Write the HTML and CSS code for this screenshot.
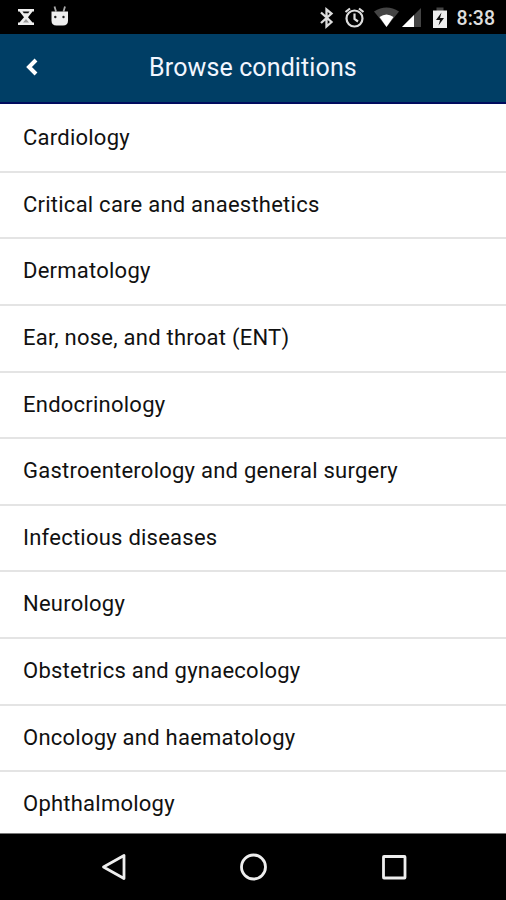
FILE: index.html
```html
<!DOCTYPE html>
<html lang="en">
<head>
    <meta charset="UTF-8">
    <meta name="viewport" content="width=device-width, initial-scale=1.0">
    <title>Browse conditions</title>
    <link rel="stylesheet" href="styles.css">
</head>
<body>
    <!-- Status bar -->
    <div class="status-bar">
        <svg class="status-left" width="80" height="34" viewBox="0 0 80 34">
            <path d="M18 9h16v2.500h-1.500L28 17.200l4.500 5.300H34V25H18v-2.500h1.500l4.500-5.300-4.500-5.700H18z" fill="#eee"/>
            <path d="M22.500 11.500h7l-1.300 1.800h-4.400z" fill="#111"/>
            <path d="M26 19l3 3.500h-6z" fill="#999"/>
            <path d="M54.500 6.500l1.500 5M65 6.500l-1.500 5" stroke="#aaa" stroke-width="1.800"/>
            <path d="M51.500 11.500h16.500v9q0 5-5 5h-6.500q-5 0-5-5z" fill="#eee"/>
            <circle cx="55.300" cy="17" r="1.200" fill="#222"/>
            <circle cx="63.500" cy="17" r="1.200" fill="#222"/>
        </svg>
        <svg class="status-right" width="136" height="34" viewBox="316 0 136 34">
            <path d="M321 12.500l10.500 9.500-5 4.500v-17l5 4L321 23" fill="none" stroke="#ddd" stroke-width="2.300"/>
            <g fill="none" stroke="#ddd" stroke-width="2.200">
                <circle cx="354.500" cy="18.500" r="8"/>
                <path d="M354.500 13.500V19l3.500 2.500M345.500 12l4.500-3.500M363.500 12L359 8.500"/>
            </g>
            <path d="M374 11.500q12.500-8 25 0L386.500 27z" fill="#444"/>
            <path d="M379.500 17q7-5 14 0L386.500 27z" fill="#fff"/>
            <path d="M402 27l19-19v19z" fill="#444"/>
            <path d="M402 27l12-12v12z" fill="#fff"/>
            <path d="M436.500 7.500h7v4h-7z" fill="#444"/>
            <path d="M433 10.500h14V28h-14z" fill="#eee"/>
            <path d="M441.500 12.500l-5.500 7.500h4l-1.500 5.500 5.500-7.500h-4z" fill="#111"/>
        </svg>
        <span class="clock">8:38</span>
    </div>

    <!-- Header -->
    <div class="header">
        <svg class="back" width="14" height="20" viewBox="0 0 14 20">
            <path d="M11 3L4 10l7 7" fill="none" stroke="#fff" stroke-width="4"/>
        </svg>
        <h1>Browse conditions</h1>
    </div>

    <!-- Conditions -->
    <ul class="conditions">
        <li>Cardiology</li>
        <li>Critical care and anaesthetics</li>
        <li>Dermatology</li>
        <li>Ear, nose, and throat (ENT)</li>
        <li>Endocrinology</li>
        <li>Gastroenterology and general surgery</li>
        <li>Infectious diseases</li>
        <li>Neurology</li>
        <li>Obstetrics and gynaecology</li>
        <li>Oncology and haematology</li>
        <li>Ophthalmology</li>
    </ul>

    <!-- Navigation bar -->
    <div class="nav-bar">
        <svg width="28" height="30" viewBox="0 0 28 30">
            <path d="M24 3.500v23L3.500 15z" fill="none" stroke="#eee" stroke-width="2.800" stroke-linejoin="round"/>
        </svg>
        <svg width="28" height="30" viewBox="0 0 28 30">
            <circle cx="13.500" cy="15" r="12" fill="none" stroke="#eee" stroke-width="2.800"/>
        </svg>
        <svg width="28" height="30" viewBox="0 0 28 30">
            <rect x="3.500" y="4.500" width="21.500" height="21.500" rx="0.500" fill="none" stroke="#eee" stroke-width="2.800"/>
        </svg>
    </div>
</body>
</html>
```
FILE: styles.css
```css
* {
    box-sizing: border-box;
}

body {
    margin: 0;
    height: 900px;
    display: flex;
    flex-direction: column;
    overflow: hidden;
    font-family: Roboto, sans-serif;
    background-color: #fff;
}

.status-bar {
    display: flex;
    align-items: center;
    flex: none;
    height: 34px;
    padding-right: 11px;
    background-color: #000;
    color: #ddd;
}

.status-right {
    margin-left: auto;
}

.clock {
    width: 43px;
    margin-top: 2px;
    text-align: right;
    white-space: nowrap;
    font-size: 19.5px;
    font-weight: 500;
}

.header {
    display: grid;
    grid-template-columns: 25px 1fr 25px;
    align-items: center;
    flex: none;
    height: 70px;
    padding: 0 25px 2px;
    background-color: #003e65;
    border-bottom: 2px solid #000b5e;
    color: #f2f6ff;
}

h1 {
    margin: 0;
    text-align: center;
    font-size: 25px;
    font-weight: 400;
    letter-spacing: 0.12px;
}

.conditions {
    flex: 1;
    min-height: 0;
    margin: 0;
    padding: 2px 0 0;
    overflow: hidden;
    list-style: none;
}

.conditions li {
    height: 66.65px;
    padding-left: 23px;
    border-bottom: 2px solid #e4e4e4;
    font-size: 22px;
    line-height: 64px;
    letter-spacing: 0.24px;
    color: #111;
}

.nav-bar {
    display: flex;
    justify-content: space-between;
    align-items: center;
    flex: none;
    height: 67px;
    padding: 0 98px 0 100px;
    border-top: 1px solid #777;
    background-color: #000;
}
```
